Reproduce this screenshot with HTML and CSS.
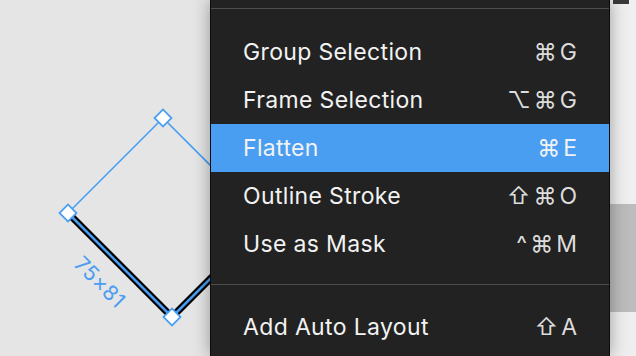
FILE: index.html
```html
<!DOCTYPE html>
<html lang="en">
<head>
    <meta charset="UTF-8">
    <meta name="viewport" content="width=device-width, initial-scale=1.0">
    <title>Context Menu</title>
    <link rel="stylesheet" href="styles.css">
</head>
<body>

<div class="canvas">
    <svg class="shape" width="210" height="356" viewBox="0 0 210 356">
        <!-- thin selection edges -->
        <line x1="68" y1="213" x2="163" y2="118" class="edge-thin" />
        <line x1="163" y1="118" x2="267" y2="222" class="edge-thin" />
        <!-- stroked edges -->
        <line x1="68" y1="213" x2="172" y2="317" class="edge-black" />
        <line x1="172" y1="317" x2="267" y2="222" class="edge-black" />
        <line x1="68" y1="213" x2="172" y2="317" class="edge-blue" />
        <line x1="172" y1="317" x2="267" y2="222" class="edge-blue" />
        <!-- handles -->
        <rect x="157" y="112" width="12" height="12" class="handle" transform="rotate(45 163 118)" />
        <rect x="62" y="207" width="12" height="12" class="handle" transform="rotate(45 68 213)" />
        <rect x="166" y="311" width="12" height="12" class="handle" transform="rotate(45 172 317)" />
        <text x="100" y="282" class="size-label" transform="rotate(45 100 282)">75×81</text>
    </svg>
</div>

<div class="menu">
    <div class="separator first"></div>
    <div class="item"><span>Group Selection</span><span class="keys">⌘G</span></div>
    <div class="item"><span>Frame Selection</span><span class="keys">⌥⌘G</span></div>
    <div class="item active"><span>Flatten</span><span class="keys">⌘E</span></div>
    <div class="item"><span>Outline Stroke</span><span class="keys">⇧⌘O</span></div>
    <div class="item"><span>Use as Mask</span><span class="keys">^⌘M</span></div>
    <div class="separator second"></div>
    <div class="item"><span>Add Auto Layout</span><span class="keys">⇧A</span></div>
</div>

<div class="side">
    <div class="side-top"><span class="side-mark"></span></div>
    <div class="side-mid"></div>
    <div class="side-bottom"></div>
</div>

</body>
</html>
```

FILE: styles.css
```css
body {
    margin: 0;
    width: 636px;
    height: 356px;
    display: flex;
    overflow: hidden;
    font-family: 'Inter', 'DejaVu Sans', sans-serif;
    background: #e5e5e5;
}
.canvas {
    width: 210px;
    height: 356px;
    background: #e5e5e5;
    overflow: hidden;
}
.shape {
    display: block;
}
.edge-thin {
    stroke: #4a9ef2;
    stroke-width: 1.6;
}
.edge-black {
    stroke: #000;
    stroke-width: 7;
}
.edge-blue {
    stroke: #4a9ef2;
    stroke-width: 2.5;
}
.handle {
    fill: #fff;
    stroke: #4a9ef2;
    stroke-width: 1.8;
}
.size-label {
    fill: #4a9ef2;
    font-family: 'Inter', sans-serif;
    font-size: 21px;
    letter-spacing: 0.5px;
    text-anchor: middle;
    dominant-baseline: central;
}
.menu {
    position: relative;
    z-index: 1;
    width: 398px;
    height: 356px;
    background: #222222;
    border-left: 1px solid #0c0c0c;
    border-right: 1px solid #0c0c0c;
    box-shadow: 0 0 16px rgba(0, 0, 0, 0.35);
}
.separator {
    height: 1px;
    background: #4c4c4c;
}
.separator.first {
    margin-top: 8px;
    margin-bottom: 19px;
}
.separator.second {
    margin-top: 16px;
    margin-bottom: 18px;
}
.item {
    height: 48px;
    display: flex;
    align-items: center;
    justify-content: space-between;
    padding: 0 32px 0 32px;
    color: #f2f2f2;
    font-size: 23px;
    letter-spacing: 0.35px;
}
.item.active {
    background: #4a9ef2;
}
.keys {
    color: #dcdcdc;
    letter-spacing: 3px;
    margin-right: -3px;
}
.item.active .keys {
    color: #f2f2f2;
}
.side {
    flex: 1;
    display: flex;
    flex-direction: column;
}
.side-top {
    height: 204px;
    background: #efefef;
}
.side-mark {
    display: block;
    width: 16px;
    height: 4px;
    margin-left: 3px;
    background: #3a3a3a;
}
.side-mid {
    height: 108px;
    background: #bcbcbc;
}
.side-bottom {
    flex: 1;
    background: #eeeeee;
}
```
